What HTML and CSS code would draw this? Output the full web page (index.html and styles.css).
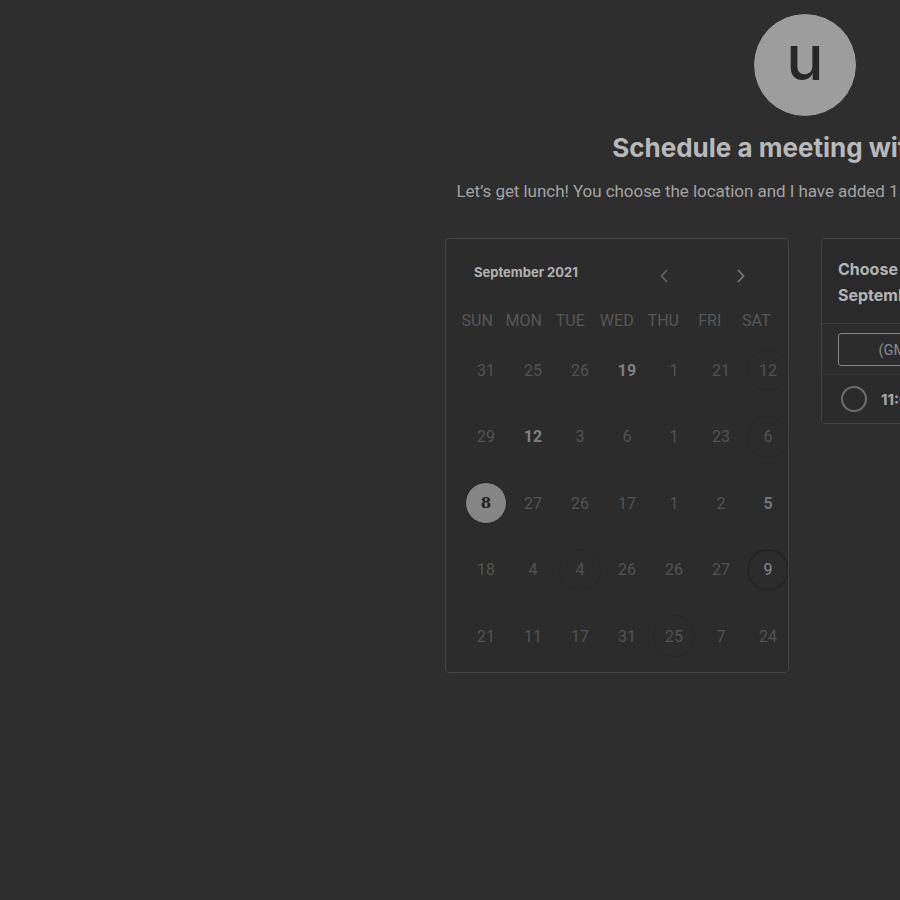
FILE: index.html
```html
<!DOCTYPE html>
<html lang="en">
<head>
<meta charset="utf-8">
<title>Schedule a meeting</title>
<link rel="stylesheet" href="styles.css">
</head>
<body>
<div class="page">
  <div class="avatar">u</div>
  <h1 class="title">Schedule a meeting with user1</h1>
  <p class="subtitle">Let’s get lunch! You choose the location and I have added 15 minutes of travel time each way.</p>
  <div class="cards">
    <div class="calendar">
      <div class="cal-head">
        <div class="month">September 2021</div>
        <button class="nav prev"><svg width="10" height="16" viewBox="0 0 10 16"><path d="M8 2 L2.5 8 L8 14" fill="none" stroke="#646464" stroke-width="1.8"/></svg></button>
        <button class="nav next"><svg width="10" height="16" viewBox="0 0 10 16"><path d="M2 2 L7.5 8 L2 14" fill="none" stroke="#767676" stroke-width="1.8"/></svg></button>
      </div>
      <div class="weekdays">
        <span>SUN</span><span>MON</span><span>TUE</span><span>WED</span><span>THU</span><span>FRI</span><span>SAT</span>
      </div>
      <div class="dates">
        <span class="d">31</span><span class="d">25</span><span class="d">26</span><span class="d b">19</span><span class="d">1</span><span class="d">21</span><span class="d ring">12</span>
        <span class="d">29</span><span class="d b">12</span><span class="d">3</span><span class="d">6</span><span class="d">1</span><span class="d">23</span><span class="d ring">6</span>
        <span class="d sel">8</span><span class="d">27</span><span class="d">26</span><span class="d">17</span><span class="d">1</span><span class="d">2</span><span class="d hi">5</span>
        <span class="d">18</span><span class="d">4</span><span class="d ring">4</span><span class="d">26</span><span class="d">26</span><span class="d">27</span><span class="d ring dark">9</span>
        <span class="d">21</span><span class="d">11</span><span class="d">17</span><span class="d">31</span><span class="d ring">25</span><span class="d">7</span><span class="d">24</span>
      </div>
    </div>
    <div class="times">
      <div class="times-head">Choose a time for Wednesday, September 8, 2021</div>
      <div class="tz-wrap"><button class="tz">(GMT-07:00) America/Los_Angeles</button></div>
      <div class="slot"><span class="radio"></span><span class="slot-text">11:00am - 11:15am</span></div>
    </div>
  </div>
</div>
</body>
</html>
```
FILE: styles.css
```css
html, body {
  margin: 0;
  padding: 0;
  background: #2e2e2e;
  width: 900px;
  height: 900px;
  overflow: hidden;
}
.page {
  width: 1610px;
  display: flex;
  flex-direction: column;
  align-items: center;
  padding-top: 13px;
  font-family: Roboto, "Liberation Sans", sans-serif;
}
.avatar {
  width: 104px;
  height: 104px;
  border-radius: 50%;
  background: #9d9d9d;
  border: 1px solid #262626;
  display: flex;
  align-items: center;
  justify-content: center;
  font-family: Inter, "Open Sans", sans-serif;
  font-weight: 500;
  font-size: 62px;
  line-height: 1;
  color: #272727;
  padding-bottom: 14px;
  box-sizing: border-box;
}
.title {
  margin: 16px 0 0;
  font-family: Inter, sans-serif;
  font-weight: 700;
  font-size: 26px;
  line-height: 30px;
  color: #b9b9b9;
  white-space: nowrap;
}
.subtitle {
  margin: 16px 0 0;
  font-size: 17px;
  line-height: 24px;
  color: #a3a3a3;
  white-space: nowrap;
  letter-spacing: -0.05px;
}
.cards {
  margin-top: 35px;
  display: flex;
  gap: 32px;
  align-items: flex-start;
}
.calendar {
  width: 342px;
  height: 433px;
  border: 1px solid #434343;
  border-radius: 4px;
  background: #2c2c2c;
  overflow: hidden;
}
.cal-head {
  margin-top: 16px;
  height: 36px;
  display: grid;
  grid-template-columns: 1fr 24px 24px;
  column-gap: 53px;
  align-items: center;
  padding: 0 35px 0 28px;
}
.month {
  font-family: Inter, sans-serif;
  font-weight: 700;
  font-size: 13px;
  color: #b2b2b2;
  margin-top: -2px;
}
.nav {
  width: 24px;
  height: 24px;
  padding: 0;
  border: 0;
  background: transparent;
  display: flex;
  align-items: center;
  justify-content: center;
  margin-top: 6px;
}
.weekdays {
  margin-top: 16px;
  height: 26px;
  display: grid;
  grid-template-columns: repeat(7, 46.5px);
  padding-left: 8px;
  align-items: center;
  font-size: 16px;
  color: #575757;
}
.weekdays span { text-align: center; }
.dates {
  margin-top: 4px;
  display: grid;
  grid-template-columns: repeat(7, 47px);
  grid-auto-rows: 66.5px;
  padding-left: 16.5px;
  width: 329px;
}
.d {
  display: flex;
  align-items: center;
  justify-content: center;
  font-size: 16px;
  color: #535353;
  position: relative;
  z-index: 0;
}
.d.b {
  font-weight: 700;
  color: #808080;
}
.d.hi {
  font-weight: 700;
  color: #747474;
}
.d.ring::before,
.d.sel::before {
  content: "";
  position: absolute;
  left: 50%;
  top: 50%;
  width: 40px;
  height: 40px;
  margin: -21px 0 0 -21px;
  border-radius: 50%;
  border: 1px solid #292929;
  z-index: -1;
}
.d.sel {
  color: #1f1f1f;
  font-weight: 700;
  font-family: "DejaVu Serif", serif;
  font-size: 15px;
}
.d.sel::before {
  background: #858585;
  border-color: #232323;
}
.d.dark { color: #8a8a8a; }
.d.dark::before { border: 2px solid #252525; width: 38px; height: 38px; }
.times {
  width: 342px;
  border: 1px solid #434343;
  border-radius: 4px;
  background: #2c2c2c;
  overflow: hidden;
}
.times-head {
  padding: 17px 17px 15px 16px;
  font-family: Inter, sans-serif;
  font-weight: 700;
  font-size: 16px;
  line-height: 26px;
  color: #b4b4b4;
  background: #2a2a2a;
  border-bottom: 1px solid #3c3c3c;
  width: 240px;
}
.tz-wrap {
  padding: 9px 17px 8px 16px;
  border-bottom: 1px solid #323232;
}
.tz {
  width: 100%;
  height: 33px;
  border: 1px solid #858585;
  border-radius: 3px;
  background: transparent;
  font-family: Roboto, sans-serif;
  font-size: 14.7px;
  color: #8a8a8a;
  white-space: nowrap;
  overflow: hidden;
}
.slot {
  height: 48px;
  display: flex;
  align-items: center;
  padding-left: 19px;
  gap: 14px;
  background: #2b2b2b;
}
.radio {
  width: 22px;
  height: 22px;
  border: 2px solid #6e6e6e;
  border-radius: 50%;
}
.slot-text {
  font-family: Inter, sans-serif;
  font-weight: 700;
  font-size: 15px;
  color: #a8a8a8;
}
```
